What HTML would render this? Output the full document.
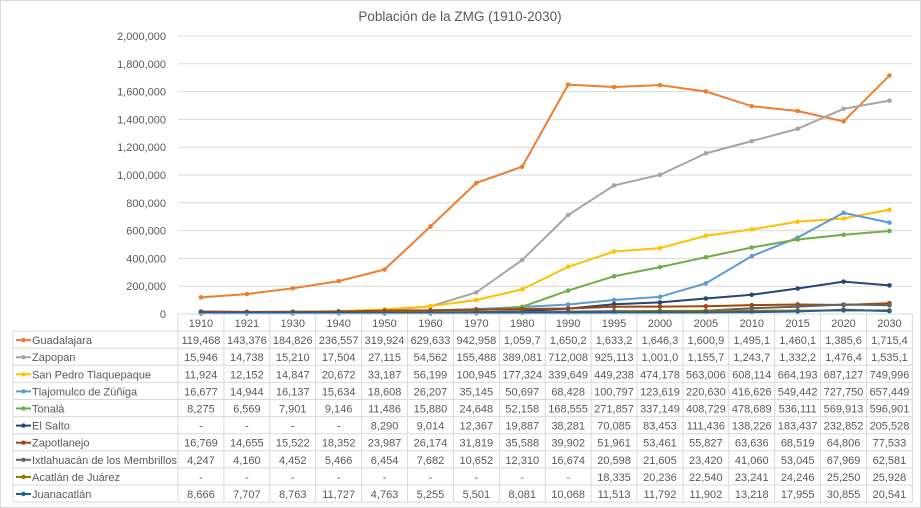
<!DOCTYPE html>
<html><head><meta charset="utf-8"><style>
html,body{margin:0;padding:0;background:#fff;}
svg{display:block;font-family:"Liberation Sans",sans-serif;}
</style></head><body>
<svg id="s" width="921" height="508" viewBox="0 0 921 508" xmlns="http://www.w3.org/2000/svg">
<rect x="0.5" y="0.5" width="920" height="507" fill="#fff" stroke="#d9d9d9"/>
<text x="460" y="21" font-size="13.5" text-anchor="middle" fill="#595959">Población de la ZMG (1910-2030)</text>
<g id="g"></g>
</svg>
<script>
const NS="http://www.w3.org/2000/svg";
const g=document.getElementById('g');
function el(t,a,txt){const e=document.createElementNS(NS,t);for(const k in a)e.setAttribute(k,a[k]);if(txt!==undefined)e.textContent=txt;g.appendChild(e);return e;}
const years=["1910","1921","1930","1940","1950","1960","1970","1980","1990","1995","2000","2005","2010","2015","2020","2030"];
const X0=178,CW=45.9,Y0=314,H=278;
const cx=i=>X0+CW*i+CW/2;
// gridlines
for(let k=0;k<=10;k++){const y=Y0-H*k/10;
 if(k>0)el('line',{x1:X0,x2:X0+CW*16,y1:y,y2:y,stroke:'#d9d9d9','stroke-width':1});
 el('text',{x:166,y:y+4,'font-size':11,'text-anchor':'end',fill:'#595959'},(k*200000).toLocaleString('en-US'));}
const series=[
["Guadalajara","#ED7D31",[119468,143376,184826,236557,319924,629633,942958,1059700,1650200,1633200,1646300,1600900,1495100,1460100,1385600,1715400],["119,468","143,376","184,826","236,557","319,924","629,633","942,958","1,059,7","1,650,2","1,633,2","1,646,3","1,600,9","1,495,1","1,460,1","1,385,6","1,715,4"]],
["Zapopan","#A5A5A5",[15946,14738,15210,17504,27115,54562,155488,389081,712008,925113,1001000,1155700,1243700,1332200,1476400,1535100],["15,946","14,738","15,210","17,504","27,115","54,562","155,488","389,081","712,008","925,113","1,001,0","1,155,7","1,243,7","1,332,2","1,476,4","1,535,1"]],
["San Pedro Tlaquepaque","#FFC000",[11924,12152,14847,20672,33187,56199,100945,177324,339649,449238,474178,563006,608114,664193,687127,749996]],
["Tlajomulco de Zúñiga","#5B9BD5",[16677,14944,16137,15634,18608,26207,35145,50697,68428,100797,123619,220630,416626,549442,727750,657449]],
["Tonalá","#70AD47",[8275,6569,7901,9146,11486,15880,24648,52158,168555,271857,337149,408729,478689,536111,569913,596901]],
["El Salto","#264478",[null,null,null,null,8290,9014,12367,19887,38281,70085,83453,111436,138226,183437,232852,205528]],
["Zapotlanejo","#9E480E",[16769,14655,15522,18352,23987,26174,31819,35588,39902,51961,53461,55827,63636,68519,64806,77533]],
["Ixtlahuacán de los Membrillos","#636363",[4247,4160,4452,5466,6454,7682,10652,12310,16674,20598,21605,23420,41060,53045,67969,62581]],
["Acatlán de Juárez","#997300",[null,null,null,null,null,null,null,null,null,18335,20236,22540,23241,24246,25250,25928]],
["Juanacatlán","#255E91",[8666,7707,8763,11727,4763,5255,5501,8081,10068,11513,11792,11902,13218,17955,30855,20541]]
];
// lines
for(const [n,c,v] of series){
 let pts=[];v.forEach((val,i)=>{const y=Y0-H*(val||0)/2000000;if(val!==null)pts.push([cx(i),y]);});
 if(pts.length){el('polyline',{points:pts.map(p=>p.join(',')).join(' '),fill:'none',stroke:c,'stroke-width':2});
 pts.forEach(p=>el('circle',{cx:p[0],cy:p[1],r:2.3,fill:c}));}
}
// table
const RT=314,RH=17.1;
const gl={stroke:'#d9d9d9','stroke-width':1,fill:'none'};
el('line',Object.assign({x1:X0,x2:X0+CW*16,y1:RT,y2:RT},gl));
el('line',Object.assign({x1:13,x2:X0+CW*16,y1:RT+RH,y2:RT+RH},gl));
for(let r=1;r<=10;r++){const y=RT+RH*(r+1);el('line',Object.assign({x1:13,x2:X0+CW*16,y1:y,y2:y},gl));}
el('line',Object.assign({x1:13,x2:13,y1:RT+RH,y2:RT+RH*11},gl));
for(let i=0;i<=16;i++){const x=X0+CW*i;el('line',Object.assign({x1:x,x2:x,y1:RT,y2:RT+RH*11},gl));}
years.forEach((y,i)=>el('text',{x:cx(i),y:RT+13,'font-size':11,'text-anchor':'middle',fill:'#595959'},y));
series.forEach(([n,c,v,lab],r)=>{
 const y=RT+RH*(r+1)+13;
 el('line',{x1:16,x2:31,y1:y-4,y2:y-4,stroke:c,'stroke-width':2});
 el('circle',{cx:23.5,cy:y-4,r:2.2,fill:c});
 el('text',{x:32,y:y,'font-size':11,fill:'#595959'},n);
 v.forEach((val,i)=>{const t=lab?lab[i]:(val===null?'-':val.toLocaleString('en-US'));
  el('text',{x:cx(i),y:y,'font-size':11,'text-anchor':'middle',fill:'#595959'},t);});
});
</script>
</body></html>
